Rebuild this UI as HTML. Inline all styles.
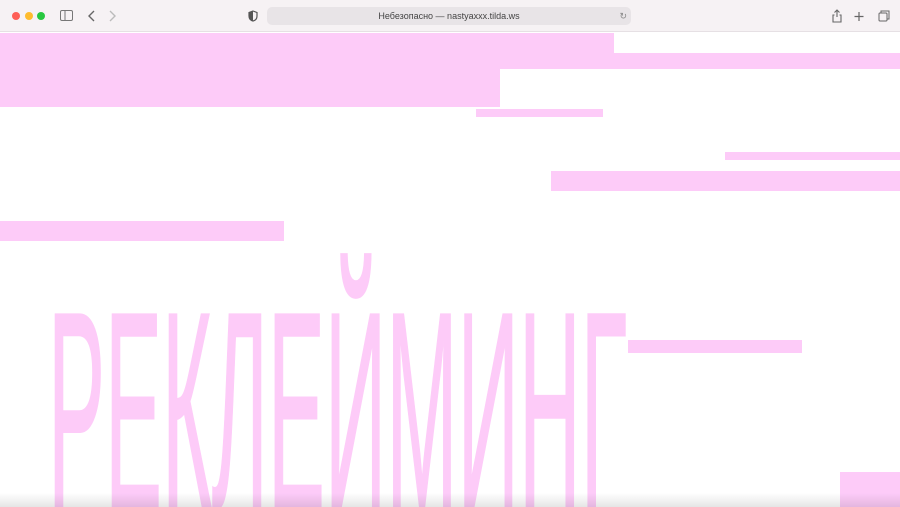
<!DOCTYPE html>
<html><head><meta charset="utf-8"><style>
*{margin:0;padding:0;box-sizing:border-box}
html,body{width:900px;height:507px;overflow:hidden}
body{background:#fff;position:relative;font-family:"Liberation Sans",sans-serif}
.bar{position:absolute;left:0;top:0;width:900px;height:32px;background:#f6f2f4;border-bottom:1px solid #e6e0e4}
.p{position:absolute;background:#fdcbf8}
.dot{position:absolute;top:12px;width:8px;height:8px;border-radius:50%}
.url{position:absolute;left:267px;top:7px;width:364px;height:18px;background:#e8e4e7;border-radius:5px;font-size:9px;color:#444;text-align:center;line-height:18px}
</style></head><body>
<div class="bar">
<div class="dot" style="left:12px;background:#fe5f57"></div>
<div class="dot" style="left:25px;background:#febc2e"></div>
<div class="dot" style="left:37px;background:#28c840"></div>
<svg style="position:absolute;left:60px;top:10px" width="14" height="12"><rect x="0.5" y="0.5" width="12" height="10" rx="1.5" fill="none" stroke="#777"/><line x1="5" y1="1" x2="5" y2="10" stroke="#777"/></svg>
<svg style="position:absolute;left:87px;top:10px" width="30" height="12"><path d="M7 1 L2 6 L7 11" fill="none" stroke="#666" stroke-width="1.4"/><path d="M23 1 L28 6 L23 11" fill="none" stroke="#bbb" stroke-width="1.4"/></svg>
<svg style="position:absolute;left:248px;top:10px" width="10" height="12"><path d="M5 1 L9 2.5 V6 C9 9 7 10.5 5 11 C3 10.5 1 9 1 6 V2.5 Z" fill="none" stroke="#555" stroke-width="1.2"/><path d="M5 1 V11 C3 10.5 1 9 1 6 V2.5Z" fill="#555"/></svg>
<div class="url">Небезопасно — nastyaxxx.tilda.ws<span style="position:absolute;right:4px;color:#888">↻</span></div>
<svg style="position:absolute;left:831px;top:9px" width="60" height="14"><path d="M6 1 V8 M3.5 3.5 L6 1 L8.5 3.5 M3.5 6 H2 V13 H10 V6 H8.5" fill="none" stroke="#666" stroke-width="1.1"/><path d="M28 3 V12 M23.5 7.5 H32.5" stroke="#666" stroke-width="1.2"/><rect x="48" y="4" width="8" height="8" rx="1" fill="none" stroke="#666"/><path d="M50 4 V2 H58 V10 H56" fill="none" stroke="#666"/></svg>
</div>
<div class="p" style="left:0;top:33px;width:614px;height:36px"></div>
<div class="p" style="left:614px;top:53px;width:286px;height:16px"></div>
<div class="p" style="left:0;top:69px;width:500px;height:38px"></div>
<div class="p" style="left:476px;top:109px;width:127px;height:8px"></div>
<div class="p" style="left:725px;top:152px;width:175px;height:8px"></div>
<div class="p" style="left:551px;top:171px;width:349px;height:20px"></div>
<div class="p" style="left:0;top:221px;width:284px;height:20px"></div>
<div class="p" style="left:628px;top:340px;width:174px;height:13px"></div>
<div class="p" style="left:840px;top:472px;width:60px;height:35px"></div>
<svg style="position:absolute;left:0;top:0;overflow:hidden" width="900" height="507"><text x="48" y="507" font-family="Liberation Sans" font-size="280" fill="#fdcbf8" stroke="#fdcbf8" stroke-width="2" textLength="579" lengthAdjust="spacingAndGlyphs">РЕКЛЕЙМИНГ</text></svg>
<div style="position:absolute;left:0;top:493px;width:900px;height:14px;background:linear-gradient(rgba(0,0,0,0),rgba(0,0,0,0.1))"></div>
</body></html>
